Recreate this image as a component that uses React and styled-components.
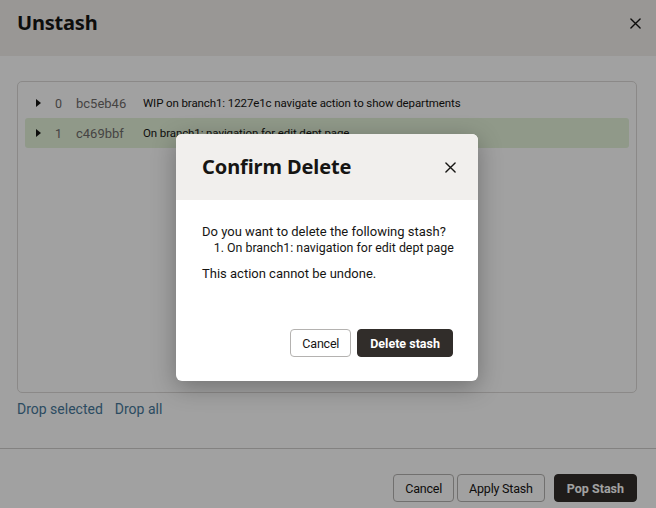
import React from "react";
import styled, { createGlobalStyle } from "styled-components";

const GlobalStyle = createGlobalStyle`
	html, body {
		margin: 0;
		padding: 0;
		width: 656px;
		height: 508px;
		overflow: hidden;
		font-family: Roboto, "Noto Sans", sans-serif;
		color: #161513;
		background: #ffffff;
	}
	* {
		box-sizing: border-box;
	}
`;

const Page = styled.div`
	position: relative;
	width: 656px;
	height: 508px;
	display: flex;
	flex-direction: column;
	background: #ffffff;
`;

const Header = styled.div`
	height: 56px;
	flex-shrink: 0;
	display: flex;
	align-items: flex-start;
	justify-content: space-between;
	padding: 9px 14px 0 17px;
	background-color: #f3efec;
`;

const Title = styled.h1`
	margin: 0;
	line-height: 28px;
	font-family: "Noto Sans", Roboto, sans-serif;
	font-size: 20px;
	font-weight: 700;
	color: #161513;
	letter-spacing: ${(props) => (props.$small ? "-0.2px" : "-0.1px")};
`;

const CloseButton = styled.button`
	border: none;
	background: transparent;
	padding: 0;
	width: 14px;
	height: 28px;
	display: flex;
	align-items: center;
	justify-content: center;
	cursor: pointer;
	color: #161513;
`;

const Body = styled.div`
	flex: 1;
	padding: 25px 19px 0 17px;
	display: flex;
	flex-direction: column;
`;

const Panel = styled.div`
	height: 312px;
	border: 1px solid #dcdad8;
	border-radius: 5px;
	padding: 6px 7px;
	display: flex;
	flex-direction: column;
`;

const Row = styled.div`
	height: 30px;
	display: flex;
	align-items: center;
	padding-left: 11px;
	border-radius: 3px;
	background-color: ${(props) => (props.$selected ? "#e4f3da" : "transparent")};
	font-size: 12.5px;
	color: #161513;
	white-space: nowrap;
`;

const Caret = styled.span`
	width: 0;
	height: 0;
	border-top: 4px solid transparent;
	border-bottom: 4px solid transparent;
	border-left: 5px solid #161513;
	margin-right: 14px;
`;

const Index = styled.span`
	width: 21px;
	color: #6f6c6a;
`;

const Hash = styled.span`
	width: 67px;
	font-size: 13px;
	color: #6f6c6a;
`;

const Message = styled.span`
	font-size: 11.5px;
	letter-spacing: -0.1px;
`;

const Links = styled.div`
	display: flex;
	gap: 12px;
	padding-top: 8px;
`;

const Link = styled.a`
	font-size: 14px;
	color: #46789a;
	text-decoration: none;
	cursor: pointer;
`;

const Footer = styled.div`
	height: 60px;
	flex-shrink: 0;
	border-top: 1px solid #d0cecc;
	display: flex;
	justify-content: flex-end;
	align-items: flex-start;
	gap: 3px;
	padding: 25px 19px 0 0;
`;

const Button = styled.button`
	height: 28px;
	padding: 0 ${(props) => (props.$primary ? "12px" : "11px")};
	margin-left: ${(props) => props.$gap || "0"};
	border-radius: 4px;
	font-family: Roboto, "Noto Sans", sans-serif;
	font-size: 12.5px;
	font-weight: ${(props) => (props.$primary ? 700 : 400)};
	letter-spacing: ${(props) => (props.$primary ? "0" : "-0.2px")};
	cursor: pointer;
	border: 1px solid ${(props) => (props.$primary ? "#312d2a" : "#b4b2b0")};
	background-color: ${(props) => (props.$primary ? "#312d2a" : "#ffffff")};
	color: ${(props) => (props.$primary ? "#ffffff" : "#161513")};
`;

const Scrim = styled.div`
	position: absolute;
	inset: 0;
	background: rgba(0, 0, 0, 0.37);
`;

const Modal = styled.div`
	position: absolute;
	left: 176px;
	top: 134px;
	width: 302px;
	height: 247px;
	background: #ffffff;
	border-radius: 6px;
	overflow: hidden;
	box-shadow: 0 6px 24px rgba(0, 0, 0, 0.3);
	display: flex;
	flex-direction: column;
`;

const ModalHeader = styled.div`
	height: 66px;
	flex-shrink: 0;
	display: flex;
	align-items: center;
	justify-content: space-between;
	padding: 0 21px 0 26px;
	background-color: #f1efed;
`;

const ModalBody = styled.div`
	flex: 1;
	padding: 24px 10px 0 26px;
	font-size: 13px;
	line-height: 16px;
	color: #161513;
`;

const Paragraph = styled.div`
	margin: 0 0 10px;
`;

const List = styled.ol`
	margin: 0;
	padding-left: 25px;
	white-space: nowrap;
	font-size: 12.4px;
`;

const ModalFooter = styled.div`
	display: flex;
	justify-content: flex-end;
	gap: 6px;
	padding: 0 25px 24px;
`;

const CloseIcon = ({ size = 11 }) => (
	<svg width={size} height={size} viewBox="0 0 12 12">
		<path
			d="M1 1 L11 11 M11 1 L1 11"
			stroke="currentColor"
			strokeWidth="1.5"
			strokeLinecap="round"
		/>
	</svg>
);

const stashes = [
	{ id: 0, hash: "bc5eb46", message: "WIP on branch1: 1227e1c navigate action to show departments" },
	{ id: 1, hash: "c469bbf", message: "On branch1: navigation for edit dept page" },
];

const App = () => {
	return (
		<>
			<GlobalStyle />
			<Page>
				<Header>
					<Title $small>Unstash</Title>
					<CloseButton aria-label="Close">
						<CloseIcon />
					</CloseButton>
				</Header>
				<Body>
					<Panel>
						{stashes.map((s) => (
							<Row key={s.id} $selected={s.id === 1}>
								<Caret />
								<Index>{s.id}</Index>
								<Hash>{s.hash}</Hash>
								<Message>{s.message}</Message>
							</Row>
						))}
					</Panel>
					<Links>
						<Link>Drop selected</Link>
						<Link>Drop all</Link>
					</Links>
				</Body>
				<Footer>
					<Button>Cancel</Button>
					<Button>Apply Stash</Button>
					<Button $primary $gap="6px">Pop Stash</Button>
				</Footer>
				<Scrim />
				<Modal role="dialog">
					<ModalHeader>
						<Title>Confirm Delete</Title>
						<CloseButton aria-label="Close">
							<CloseIcon />
						</CloseButton>
					</ModalHeader>
					<ModalBody>
						<Paragraph>
							Do you want to delete the following stash?
							<List>
								<li>On branch1: navigation for edit dept page</li>
							</List>
						</Paragraph>
						<Paragraph>This action cannot be undone.</Paragraph>
					</ModalBody>
					<ModalFooter>
						<Button>Cancel</Button>
						<Button $primary>Delete stash</Button>
					</ModalFooter>
				</Modal>
			</Page>
		</>
	);
};

export default App;
